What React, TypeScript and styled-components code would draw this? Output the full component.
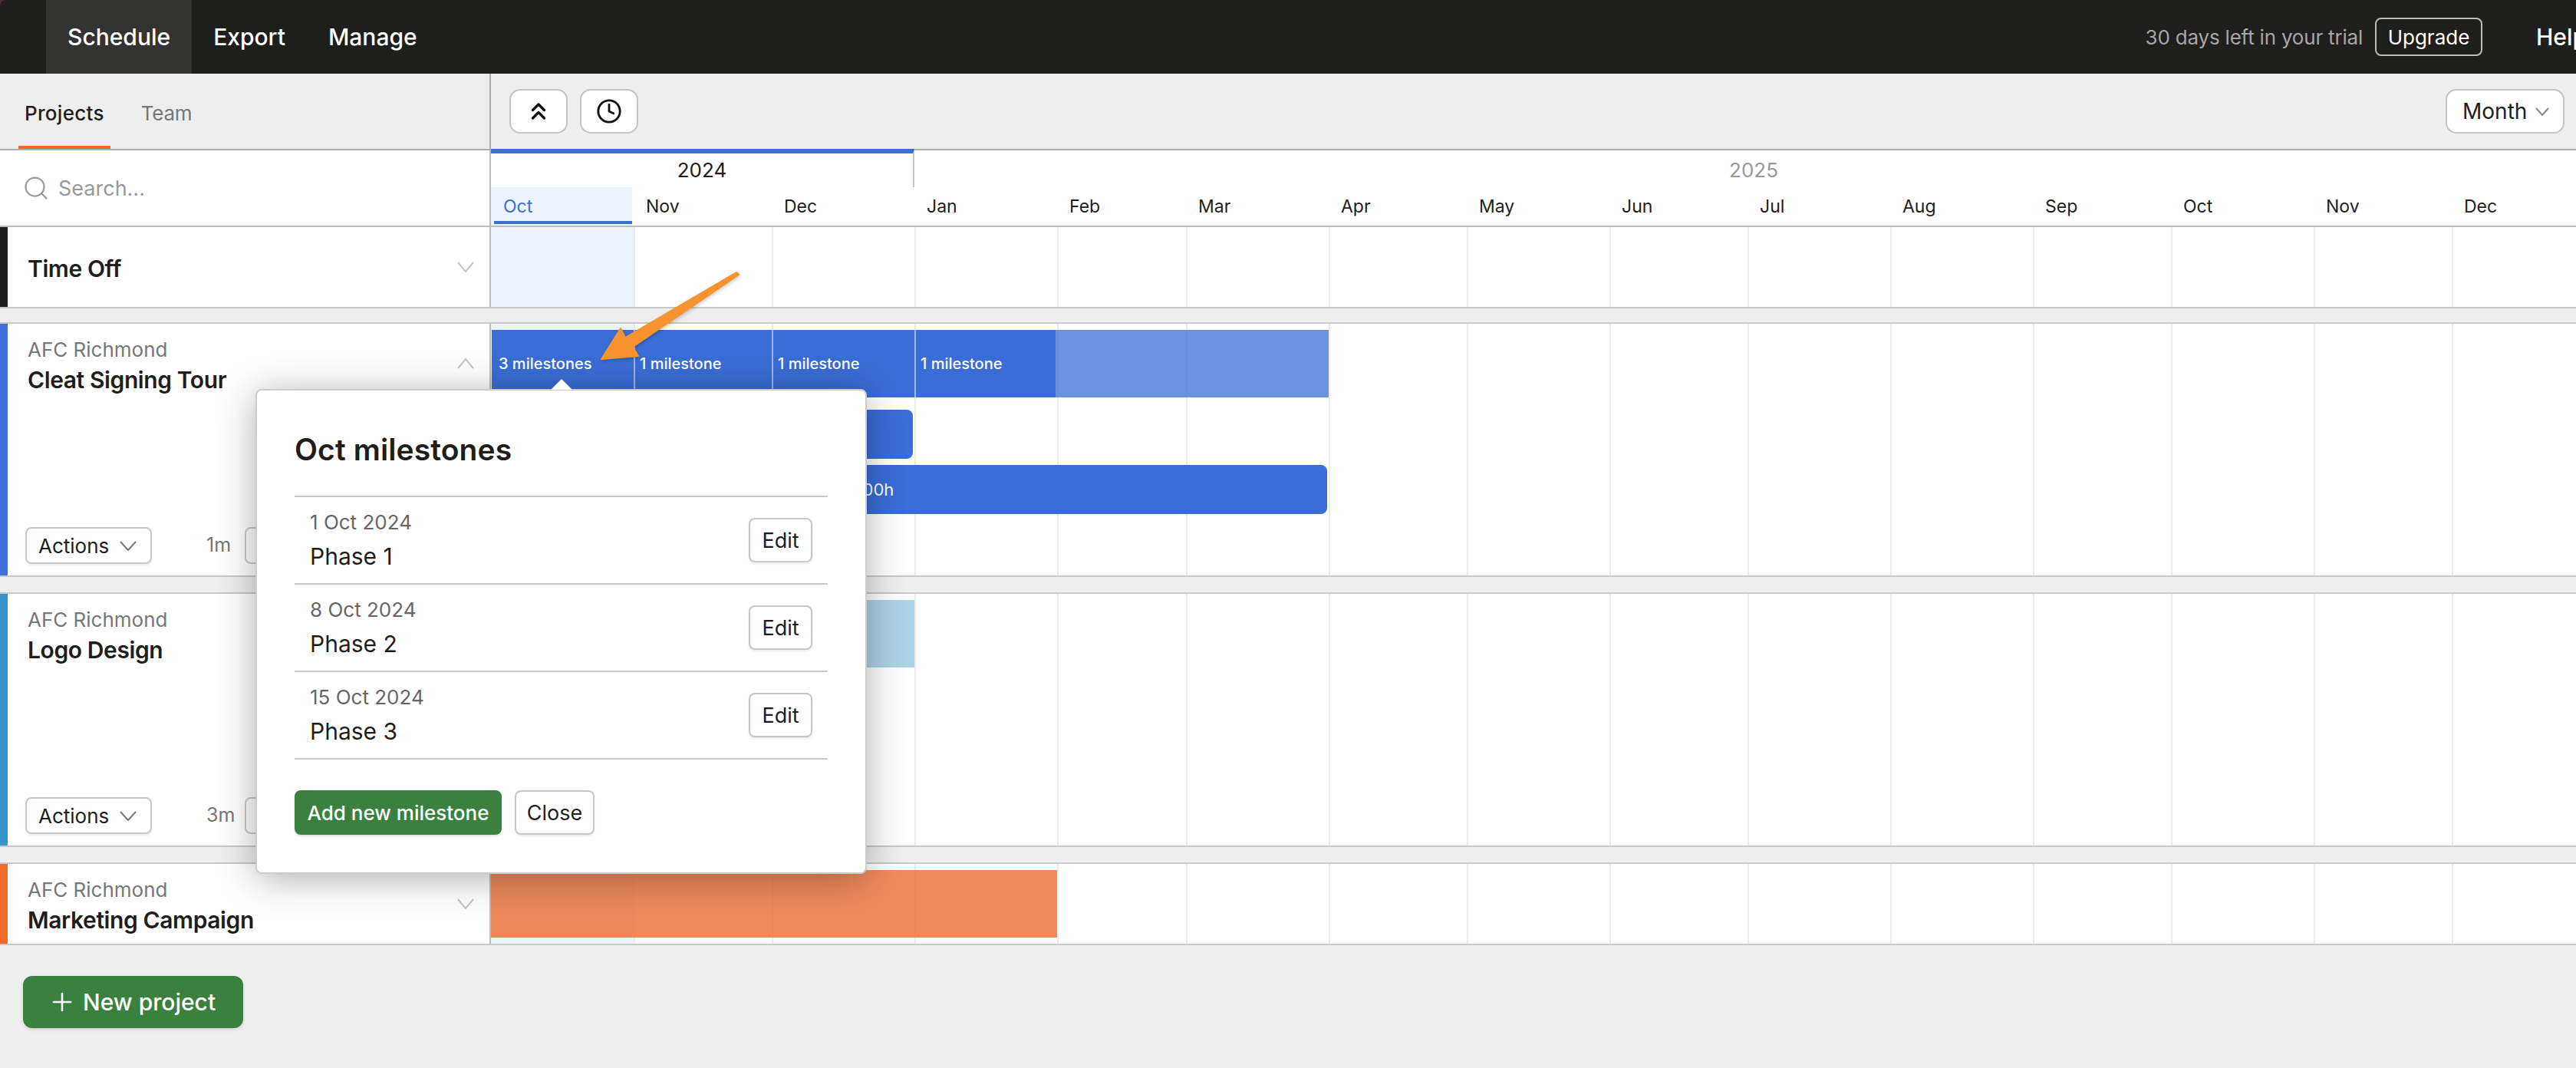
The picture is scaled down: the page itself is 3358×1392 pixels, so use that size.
import React from 'react';
import styled, { createGlobalStyle } from 'styled-components';
import { ChevronsUp, Clock, Plus, Search } from 'lucide-react';

const GlobalStyle = createGlobalStyle`
  * {
    box-sizing: border-box;
  }
  html, body {
    margin: 0;
    height: 100%;
    overflow: hidden;
    background: #eeeeee;
    font-family: Inter, "Liberation Sans", sans-serif;
    color: #1e1e1c;
  }
`;

const PANEL_WIDTH = 640;
const DAY_WIDTH = 6;

const months = [
  { name: 'Oct', days: 31 },
  { name: 'Nov', days: 30 },
  { name: 'Dec', days: 31 },
  { name: 'Jan', days: 31 },
  { name: 'Feb', days: 28 },
  { name: 'Mar', days: 31 },
  { name: 'Apr', days: 30 },
  { name: 'May', days: 31 },
  { name: 'Jun', days: 30 },
  { name: 'Jul', days: 31 },
  { name: 'Aug', days: 31 },
  { name: 'Sep', days: 30 },
  { name: 'Oct', days: 31 },
  { name: 'Nov', days: 30 },
  { name: 'Dec', days: 31 },
];

const milestones = [
  { date: '1 Oct 2024', name: 'Phase 1' },
  { date: '8 Oct 2024', name: 'Phase 2' },
  { date: '15 Oct 2024', name: 'Phase 3' },
];

const Page = styled.div`
  position: relative;
  width: 3358px;
  height: 1392px;
  overflow: hidden;
  background: #eeeeee;
`;

const TopBarFrame = styled.div`
  background: #4a2a40;
`;

const TopBar = styled.header`
  display: flex;
  align-items: center;
  height: 96px;
  padding-left: 60px;
  border-top-left-radius: 8px;
  background: #1e1e1c;
`;

const NavItem = styled.a<{ $active?: boolean }>`
  display: flex;
  align-items: center;
  height: 96px;
  padding: 0 28px;
  background: ${(p) => (p.$active ? '#333332' : 'transparent')};
  color: #ffffff;
  font-size: 30px;
  font-weight: 500;
`;

const NavSpacer = styled.div`
  flex: 1;
`;

const TrialText = styled.span`
  color: #a6a6a6;
  font-size: 26px;
  letter-spacing: -0.2px;
  white-space: nowrap;
`;

const UpgradeButton = styled.button`
  width: 140px;
  height: 50px;
  margin-left: 16px;
  border: 2px solid #bbbbbb;
  border-radius: 8px;
  background: transparent;
  color: #ffffff;
  font-family: inherit;
  font-size: 26px;
`;

const HelpLink = styled.a`
  flex: none;
  width: 52px;
  margin-left: 70px;
  overflow: visible;
  color: #ffffff;
  font-size: 30px;
  font-weight: 500;
  white-space: nowrap;
`;

const ToolRow = styled.div`
  display: flex;
  height: 100px;
  border-bottom: 2px solid #adadad;
`;

const TabsPane = styled.div`
  display: flex;
  align-items: flex-end;
  gap: 32px;
  width: ${PANEL_WIDTH}px;
  padding-left: 24px;
  border-right: 2px solid #adadad;
`;

const Tab = styled.a<{ $active?: boolean }>`
  height: 76px;
  padding: 0 8px;
  border-bottom: 4px solid ${(p) => (p.$active ? '#f26b2a' : 'transparent')};
  color: ${(p) => (p.$active ? '#1e1e1c' : '#777777')};
  font-size: 26px;
  font-weight: ${(p) => (p.$active ? 500 : 400)};
  letter-spacing: ${(p) => (p.$active ? '0.3px' : '-0.3px')};
  line-height: 60px;
`;

const ToolsPane = styled.div`
  display: flex;
  flex: 1;
  align-items: flex-start;
  gap: 16px;
  padding: 20px 15px 0 24px;
`;

const IconButton = styled.button`
  display: flex;
  align-items: center;
  justify-content: center;
  width: 76px;
  height: 58px;
  padding: 0;
  border: 2px solid #c4c4c4;
  border-radius: 14px;
  background: #ffffff;
  color: #111111;
`;

const MonthSelect = styled.button`
  display: flex;
  align-items: center;
  gap: 11px;
  width: 155px;
  height: 58px;
  margin-left: auto;
  padding: 0 0 0 20px;
  border: 2px solid #c4c4c4;
  border-radius: 14px;
  background: #ffffff;
  color: #1e1e1c;
  font-family: inherit;
  font-size: 28px;
`;

const CalendarRow = styled.div`
  display: flex;
  height: 100px;
  border-bottom: 2px solid #bcbcbc;
  background: #ffffff;
`;

const SearchPane = styled.div`
  display: flex;
  align-items: center;
  gap: 11px;
  flex: none;
  width: ${PANEL_WIDTH}px;
  padding-left: 29px;
  border-right: 2px solid #bcbcbc;
  color: #999999;
  font-size: 27px;
`;

const Calendar = styled.div`
  flex: 1;
  min-width: 0;
  margin-top: -2px;
  overflow: hidden;
`;

const YearRow = styled.div`
  display: flex;
  height: 50px;
`;

const Year = styled.div<{ $days: number; $current?: boolean }>`
  flex: none;
  width: ${(p) => p.$days * DAY_WIDTH}px;
  border-top: 6px solid ${(p) => (p.$current ? '#3b6fd9' : 'transparent')};
  border-right: 2px solid ${(p) => (p.$current ? '#c8c8c8' : 'transparent')};
  color: ${(p) => (p.$current ? '#1e1e1c' : '#999999')};
  font-size: 26px;
  line-height: 43px;
  text-align: center;
`;

const MonthRow = styled.div`
  display: flex;
  height: 50px;
`;

const MonthCell = styled.div<{ $days: number; $current?: boolean }>`
  position: relative;
  flex: none;
  width: ${(p) => p.$days * DAY_WIDTH}px;
  padding-left: 16px;
  border-right: 2px solid transparent;
  background: ${(p) => (p.$current ? '#ebf3fd' : 'transparent')};
  background-clip: padding-box;
  color: ${(p) => (p.$current ? '#3b6fd9' : '#1e1e1c')};
  font-size: 23px;
  line-height: 50px;

  &::after {
    content: '';
    display: ${(p) => (p.$current ? 'block' : 'none')};
    position: absolute;
    left: 4px;
    right: 0;
    bottom: 2px;
    height: 4px;
    background: #3b6fd9;
  }
`;

const ProjectRow = styled.section<{ $gap: number; $height: number }>`
  display: flex;
  height: ${(p) => p.$height}px;
  margin-top: ${(p) => p.$gap}px;
  border-top: ${(p) => (p.$gap ? '2px solid #c8c8c8' : 'none')};
  border-bottom: 2px solid #c8c8c8;
  background: #ffffff;
`;

const ProjectPanel = styled.div<{ $accent: string }>`
  display: flex;
  flex-direction: column;
  flex: none;
  width: ${PANEL_WIDTH}px;
  border-left: 10px solid ${(p) => p.$accent};
  border-right: 2px solid #bcbcbc;
`;

const ProjectHead = styled.div`
  display: flex;
  align-items: center;
  justify-content: space-between;
  height: 104px;
  padding: 0 20px 0 26px;
`;

const ProjectTitle = styled.div`
  padding-top: 5px;
`;

const Client = styled.div`
  color: #777777;
  font-size: 26px;
  line-height: 32px;
`;

const ProjectName = styled.div`
  margin-top: 4px;
  font-size: 30px;
  font-weight: 600;
  letter-spacing: -0.4px;
  line-height: 38px;
`;

const ChevronSvg = styled.svg<{ $up?: boolean }>`
  flex: none;
  transform: ${(p) => (p.$up ? 'scaleY(-1)' : 'none')};
`;

const Chevron = ({ width, height, color, up }: { width: number; height: number; color: string; up?: boolean }) => (
  <ChevronSvg $up={up} width={width} height={height} viewBox={`0 0 ${width} ${height}`} fill="none">
    <polyline
      points={`1,1 ${width / 2},${height - 1} ${width - 1},1`}
      stroke={color}
      strokeWidth="2"
    />
  </ChevronSvg>
);

const ActionsRow = styled.div`
  display: flex;
  align-items: center;
  margin-top: auto;
  padding: 0 0 15px 23px;
`;

const ActionsButton = styled.button`
  display: flex;
  align-items: center;
  gap: 14px;
  width: 165px;
  height: 48px;
  padding: 0 0 0 15px;
  border: 2px solid #c8c8c8;
  border-radius: 8px;
  background: #ffffff;
  box-shadow: 0 2px 3px rgba(0, 0, 0, 0.08);
  color: #1e1e1c;
  font-family: inherit;
  font-size: 26px;
`;

const Duration = styled.span`
  width: 34px;
  margin: -3px 0 0 71px;
  color: #777777;
  font-size: 25px;
`;

const StepperBox = styled.div`
  width: 120px;
  height: 48px;
  margin-left: 16px;
  border: 2px solid #c8c8c8;
  border-radius: 8px;
  background: #ffffff;
`;

const Timeline = styled.div`
  position: relative;
  flex: 1;
  min-width: 0;
  overflow: hidden;
`;

const GridColumns = styled.div`
  position: absolute;
  top: 0;
  bottom: 0;
  left: 0;
  display: flex;
`;

const GridColumn = styled.div<{ $days: number; $current?: boolean }>`
  flex: none;
  width: ${(p) => p.$days * DAY_WIDTH}px;
  border-left: ${(p) => (p.$current ? 'none' : '2px solid #ececec')};
  background: ${(p) => (p.$current ? '#ebf3fd' : 'transparent')};
`;

const Bars = styled.div`
  position: relative;
  display: flex;
  flex-direction: column;
  padding-top: 8px;
`;

const MilestoneBar = styled.div`
  display: flex;
  height: 88px;
`;

const MilestoneSegment = styled.div<{ $width: number; $first?: boolean }>`
  flex: none;
  width: ${(p) => p.$width}px;
  padding-left: ${(p) => (p.$first ? 9 : 6)}px;
  margin-left: ${(p) => (p.$first ? 1 : 0)}px;
  border-left: ${(p) => (p.$first ? 'none' : '2px solid rgba(255, 255, 255, 0.5)')};
  background: #3a6dd5;
  background-clip: border-box;
  color: #ffffff;
  font-size: 20px;
  font-weight: 500;
  line-height: 88px;
`;

const GhostSegment = styled.div<{ $width: number }>`
  flex: none;
  width: ${(p) => p.$width}px;
  background: rgba(58, 109, 213, 0.75);
`;

const AllocationBar = styled.div<{ $width: number; $top: number }>`
  width: ${(p) => p.$width}px;
  height: 64px;
  margin-top: ${(p) => p.$top}px;
  padding-left: 471px;
  border-radius: 8px;
  background: #3a6dd5;
  color: #ffffff;
  font-size: 22px;
  line-height: 64px;
`;

const PhaseBar = styled.div<{ $width: number; $color: string }>`
  width: ${(p) => p.$width}px;
  height: 88px;
  background: ${(p) => p.$color};
`;

const NewProjectButton = styled.button`
  display: flex;
  align-items: center;
  gap: 8px;
  width: 287px;
  height: 68px;
  margin: 40px 0 0 30px;
  padding: 0 0 0 32px;
  border: none;
  border-radius: 12px;
  background: #3a813f;
  box-shadow: 0 2px 4px rgba(0, 0, 0, 0.12);
  color: #ffffff;
  font-family: inherit;
  font-size: 30px;
  font-weight: 500;
`;

const Popover = styled.div`
  position: absolute;
  top: 507px;
  left: 333px;
  z-index: 5;
  width: 797px;
  height: 632px;
  padding: 53px 49px 0;
  border: 2px solid #cccccc;
  border-radius: 8px;
  background: #ffffff;
  box-shadow: 0 6px 50px rgba(0, 0, 0, 0.32);

  &::before {
    content: '';
    position: absolute;
    top: -15px;
    left: 383px;
    border-left: 14px solid transparent;
    border-right: 14px solid transparent;
    border-bottom: 14px solid #ffffff;
  }
`;

const PopoverTitle = styled.h2`
  margin: 0 0 36px;
  font-size: 39px;
  font-weight: 600;
  letter-spacing: 0.1px;
  line-height: 48px;
`;

const MilestoneList = styled.div`
  border-top: 2px solid #c8c8c8;
`;

const MilestoneItem = styled.div`
  display: flex;
  align-items: center;
  justify-content: space-between;
  height: 114px;
  padding: 0 20px;
  border-bottom: 2px solid #c8c8c8;
`;

const MilestoneDate = styled.div`
  color: #666666;
  font-size: 26px;
  line-height: 34px;
`;

const MilestoneName = styled.div`
  margin-top: 7px;
  font-size: 30px;
  line-height: 40px;
`;

const OutlineButton = styled.button<{ $width: number }>`
  width: ${(p) => p.$width}px;
  height: 58px;
  padding: 0;
  border: 2px solid #c8c8c8;
  border-radius: 8px;
  background: #ffffff;
  box-shadow: 0 2px 3px rgba(0, 0, 0, 0.08);
  color: #1e1e1c;
  font-family: inherit;
  font-size: 27px;
`;

const PopoverFooter = styled.div`
  display: flex;
  gap: 17px;
  margin-top: 40px;
`;

const AddButton = styled.button`
  width: 270px;
  height: 58px;
  padding: 0;
  border: none;
  border-radius: 8px;
  background: #3a813f;
  box-shadow: 0 2px 3px rgba(0, 0, 0, 0.12);
  color: #ffffff;
  font-family: inherit;
  font-size: 26px;
  font-weight: 500;
`;

const ArrowSvg = styled.svg`
  position: absolute;
  top: 350px;
  left: 778px;
  z-index: 6;
  overflow: visible;
  filter: drop-shadow(1px 2px 2px rgba(0, 0, 0, 0.2));
`;

const GridLines = () => (
  <GridColumns>
    {months.map((m, i) => (
      <GridColumn key={i} $days={m.days} $current={i === 0} />
    ))}
  </GridColumns>
);

const App: React.FC = () => {
  return (
    <Page>
      <GlobalStyle />
      <TopBarFrame>
        <TopBar>
          <NavItem $active>Schedule</NavItem>
          <NavItem>Export</NavItem>
          <NavItem>Manage</NavItem>
          <NavSpacer />
          <TrialText>30 days left in your trial</TrialText>
          <UpgradeButton>Upgrade</UpgradeButton>
          <HelpLink>Help</HelpLink>
        </TopBar>
      </TopBarFrame>

      <ToolRow>
        <TabsPane>
          <Tab $active>Projects</Tab>
          <Tab>Team</Tab>
        </TabsPane>
        <ToolsPane>
          <IconButton>
            <ChevronsUp size={36} strokeWidth={2.2} />
          </IconButton>
          <IconButton>
            <Clock size={34} strokeWidth={2} />
          </IconButton>
          <MonthSelect>
            Month
            <Chevron width={18} height={11} color="#888888" />
          </MonthSelect>
        </ToolsPane>
      </ToolRow>

      <CalendarRow>
        <SearchPane>
          <Search size={36} strokeWidth={1.5} />
          Search...
        </SearchPane>
        <Calendar>
          <YearRow>
            <Year $days={92} $current>2024</Year>
            <Year $days={365}>2025</Year>
          </YearRow>
          <MonthRow>
            {months.map((m, i) => (
              <MonthCell key={i} $days={m.days} $current={i === 0}>{m.name}</MonthCell>
            ))}
          </MonthRow>
        </Calendar>
      </CalendarRow>

      <ProjectRow $gap={0} $height={106}>
        <ProjectPanel $accent="#1e1e1c">
          <ProjectHead>
            <ProjectName>Time Off</ProjectName>
            <Chevron width={22} height={14} color="#c4c4c4" />
          </ProjectHead>
        </ProjectPanel>
        <Timeline>
          <GridLines />
        </Timeline>
      </ProjectRow>

      <ProjectRow $gap={18} $height={332}>
        <ProjectPanel $accent="#3b6fd9">
          <ProjectHead>
            <ProjectTitle>
              <Client>AFC Richmond</Client>
              <ProjectName>Cleat Signing Tour</ProjectName>
            </ProjectTitle>
            <Chevron up width={22} height={14} color="#c4c4c4" />
          </ProjectHead>
          <ActionsRow>
            <ActionsButton>
              Actions
              <Chevron width={22} height={13} color="#777777" />
            </ActionsButton>
            <Duration>1m</Duration>
            <StepperBox />
          </ActionsRow>
        </ProjectPanel>
        <Timeline>
          <GridLines />
          <Bars>
            <MilestoneBar>
              <MilestoneSegment $width={185} $first>3 milestones</MilestoneSegment>
              <MilestoneSegment $width={180}>1 milestone</MilestoneSegment>
              <MilestoneSegment $width={186}>1 milestone</MilestoneSegment>
              <MilestoneSegment $width={184}>1 milestone</MilestoneSegment>
              <GhostSegment $width={356} />
            </MilestoneBar>
            <AllocationBar $width={550} $top={16} />
            <AllocationBar $width={1090} $top={8}>300h</AllocationBar>
          </Bars>
        </Timeline>
      </ProjectRow>

      <ProjectRow $gap={20} $height={332}>
        <ProjectPanel $accent="#3796c9">
          <ProjectHead>
            <ProjectTitle>
              <Client>AFC Richmond</Client>
              <ProjectName>Logo Design</ProjectName>
            </ProjectTitle>
            <Chevron up width={22} height={14} color="#c4c4c4" />
          </ProjectHead>
          <ActionsRow>
            <ActionsButton>
              Actions
              <Chevron width={22} height={13} color="#777777" />
            </ActionsButton>
            <Duration>3m</Duration>
            <StepperBox />
          </ActionsRow>
        </ProjectPanel>
        <Timeline>
          <GridLines />
          <Bars>
            <PhaseBar $width={552} $color="#acd2e5" />
          </Bars>
        </Timeline>
      </ProjectRow>

      <ProjectRow $gap={20} $height={108}>
        <ProjectPanel $accent="#f26b2a">
          <ProjectHead>
            <ProjectTitle>
              <Client>AFC Richmond</Client>
              <ProjectName>Marketing Campaign</ProjectName>
            </ProjectTitle>
            <Chevron width={22} height={14} color="#c4c4c4" />
          </ProjectHead>
        </ProjectPanel>
        <Timeline>
          <GridLines />
          <Bars>
            <PhaseBar $width={738} $color="rgba(236, 117, 62, 0.85)" />
          </Bars>
        </Timeline>
      </ProjectRow>

      <NewProjectButton>
        <Plus size={38} strokeWidth={1.6} />
        New project
      </NewProjectButton>

      <Popover>
        <PopoverTitle>Oct milestones</PopoverTitle>
        <MilestoneList>
          {milestones.map((m) => (
            <MilestoneItem key={m.name}>
              <div>
                <MilestoneDate>{m.date}</MilestoneDate>
                <MilestoneName>{m.name}</MilestoneName>
              </div>
              <OutlineButton $width={83}>Edit</OutlineButton>
            </MilestoneItem>
          ))}
        </MilestoneList>
        <PopoverFooter>
          <AddButton>Add new milestone</AddButton>
          <OutlineButton $width={104}>Close</OutlineButton>
        </PopoverFooter>
      </Popover>

      <ArrowSvg width="190" height="125" viewBox="0 0 190 125">
        <path
          d="M6 118 L31 78 L37 90 L182 5 L185 8 L47 102 L54 114 Z"
          fill="#f7932e"
          stroke="#f7932e"
          strokeWidth="2"
          strokeLinejoin="round"
        />
      </ArrowSvg>
    </Page>
  );
};

export default App;
